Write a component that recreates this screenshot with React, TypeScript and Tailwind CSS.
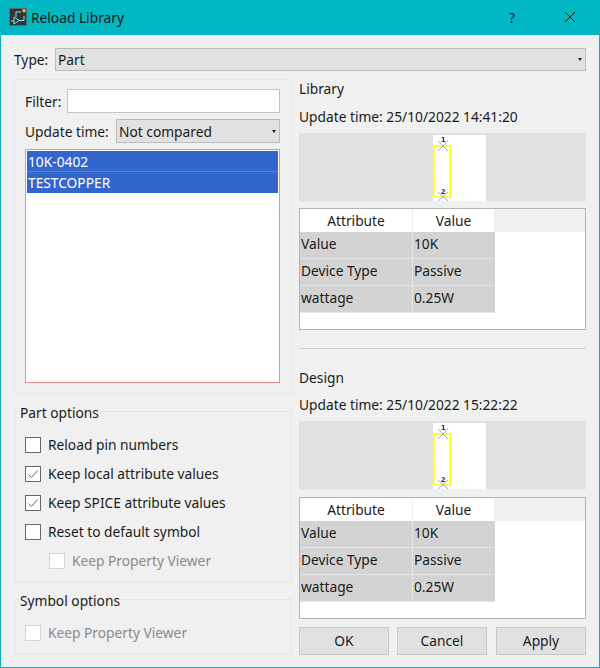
import type { ReactNode } from "react";

const rows = [
  ["Value", "10K"],
  ["Device Type", "Passive"],
  ["wattage", "0.25W"],
];

function AppIcon() {
  return (
    <svg width="18" height="18" viewBox="0 0 18 18" className="shrink-0">
      <rect x="0.5" y="0.5" width="17" height="17" fill="#2b373c" stroke="#5c6a6e" />
      <path d="M2 13h3M5 9v7l5-3.5zM10 12.5h5M7 9V4h5M15 12.5V8" fill="none" stroke="#8fe3e3" strokeWidth="1" />
      <circle cx="15" cy="2.8" r="1.8" fill="#f7b52c" />
    </svg>
  );
}

function Arrow() {
  return <span className="h-0 w-0 border-x-[2.5px] border-t-[3px] border-x-transparent border-t-[#222]" />;
}

function Combo({ text, className }: { text: string; className: string }) {
  return (
    <div className={`flex items-center justify-between border border-[#bdbdbd] bg-[#e1e1e1] pl-[2px] pr-[3px] ${className}`}>
      <span className="mt-px">{text}</span>
      <Arrow />
    </div>
  );
}

function Check({ label, checked, disabled, className }: { label: string; checked?: boolean; disabled?: boolean; className?: string }) {
  return (
    <div className={`flex h-[29px] items-center gap-[7px] ${disabled ? "text-[#8a8a8a]" : ""} ${className ?? ""}`}>
      <span className={`flex h-4 w-4 items-center justify-center border bg-white ${disabled ? "border-[#d4d4d4]" : "border-[#666]"}`}>
        {checked && (
          <svg width="12" height="12" viewBox="0 0 12 12">
            <path d="M1.5 6.5 4.5 9.5 10.5 2.5" fill="none" stroke="#666" strokeWidth="1" />
          </svg>
        )}
      </span>
      <span>{label}</span>
    </div>
  );
}

function Group({ title, className, children }: { title: string; className: string; children: ReactNode }) {
  return (
    <div className={`relative border border-[#e4e4e4] ${className}`}>
      <span className="absolute left-[5px] top-[-9px] bg-[#f0f0f0] pr-[1px] leading-[20px]">{title}</span>
      {children}
    </div>
  );
}

function Preview() {
  return (
    <div className="flex h-[68px] justify-center bg-[#e0e0e0]">
      <div className="ml-[33px] mt-[2px] w-[53px] bg-white">
        <svg width="53" height="66" viewBox="0 0 53 66">
          <rect x="1" y="11" width="16.5" height="51" fill="none" stroke="#ffff00" strokeWidth="1.5" />
          <path d="M5 6 15 16M15 6 5 16M5 57 15 66M15 57 5 66" stroke="#9aa6ee" strokeWidth="1" />
          <text x="8" y="7" fontSize="8" fontWeight="700" fill="#222" fontFamily="Liberation Sans">1</text>
          <text x="8" y="59" fontSize="8" fontWeight="700" fill="#222" fontFamily="Liberation Sans">2</text>
        </svg>
      </div>
    </div>
  );
}

function AttrTable() {
  return (
    <div className="h-[122px] border border-[#b4b4b4] bg-white">
      <div className="flex h-[23px] bg-[#efefef] leading-[24px]">
        <div className="w-[112px] bg-white text-center">Attribute</div>
        <div className="ml-px w-[81px] bg-white text-center">Value</div>
      </div>
      {rows.map(([name, value]) => (
        <div key={name} className="flex h-[27px] w-[195px] border-b border-[#e6e6e6] bg-[#d3d3d3] leading-[24px]">
          <div className="w-[112px] pl-[1px]">{name}</div>
          <div className="w-px bg-[#e6e6e6]" />
          <div className="pl-[1px]">{value}</div>
        </div>
      ))}
    </div>
  );
}

function Btn({ label, className }: { label: string; className?: string }) {
  return <div className={`flex h-[28px] w-[90px] items-center justify-center border border-[#c8c8c8] bg-[#e1e1e1] ${className ?? ""}`}>{label}</div>;
}

export default function App() {
  return (
    <div className="flex h-[668px] w-[600px] flex-col border border-t-0 border-[#00b7c3] bg-[#f0f0f0] font-['Noto_Sans','Open_Sans',sans-serif] text-[13.75px] leading-[20px] text-[#1a1a1a]">
      <div className="mx-[-1px] flex h-[35px] shrink-0 items-center bg-[#00b7c3] pb-[1px] pl-[9px] pr-[24px]">
        <AppIcon />
        <span className="ml-[4px] flex-1 pt-px">Reload Library</span>
        <span className="mr-[49px] mt-px text-[14px]">?</span>
        <svg width="12" height="12" viewBox="0 0 12 12">
          <path d="M1 1 11 11M11 1 1 11" stroke="#1a1a1a" strokeWidth="1" />
        </svg>
      </div>

      <div className="flex flex-1 flex-col pl-[13px] pr-[13px]">
        <div className="mt-[13px] flex h-[23px] items-center">
          <span className="w-[41px]">Type:</span>
          <Combo text="Part" className="h-[23px] flex-1" />
        </div>

        <div className="mt-[8px] flex gap-[7px]">
          <div className="flex w-[278px] flex-col">
            <div className="h-[315px] border border-[#e6e6e6] pl-[10px] pr-[11px] pt-[9px]">
              <div className="flex h-[24px] items-center">
                <span className="mt-px w-[42px]">Filter:</span>
                <div className="h-[24px] flex-1 border border-[#c4c4c4] bg-white" />
              </div>
              <div className="mt-[6px] flex h-[24px] items-center">
                <span className="mt-px w-[91px]">Update time:</span>
                <Combo text="Not compared" className="h-[24px] flex-1" />
              </div>
              <div className="mt-[6px] h-[234px] border border-[#f28b8b] bg-white p-px text-white">
                <div className="h-[21px] border-b border-[#5f82cf] bg-[#3366cc] pl-[1px] leading-[22px]">10K-0402</div>
                <div className="h-[21px] bg-[#3366cc] pl-[1px] leading-[22px]">TESTCOPPER</div>
              </div>
            </div>

            <Group title="Part options" className="mt-[17px] h-[171px] px-[10px] pt-[18px]">
              <Check label="Reload pin numbers" />
              <Check label="Keep local attribute values" checked />
              <Check label="Keep SPICE attribute values" checked />
              <Check label="Reset to default symbol" />
              <Check label="Keep Property Viewer" disabled className="ml-[24px]" />
            </Group>

            <Group title="Symbol options" className="mt-[17px] h-[55px] px-[10px] pt-[18px]">
              <Check label="Keep Property Viewer" disabled />
            </Group>
          </div>

          <div className="flex w-[287px] flex-col">
            <div className="h-[20px]">Library</div>
            <div className="mt-[8px] h-[20px]">Update time: 25/10/2022 14:41:20</div>
            <div className="mt-[6px]"><Preview /></div>
            <div className="mt-[7px]"><AttrTable /></div>
            <div className="mt-[18px] h-px bg-[#cfcfcf]" />
            <div className="mt-[19px] h-[20px]">Design</div>
            <div className="mt-[7px] h-[20px]">Update time: 25/10/2022 15:22:22</div>
            <div className="mt-[6px]"><Preview /></div>
            <div className="mt-[8px]"><AttrTable /></div>
            <div className="mt-[8px] flex">
              <Btn label="OK" />
              <Btn label="Cancel" className="ml-[8px]" />
              <Btn label="Apply" className="ml-[9px]" />
            </div>
          </div>
        </div>
      </div>
    </div>
  );
}
